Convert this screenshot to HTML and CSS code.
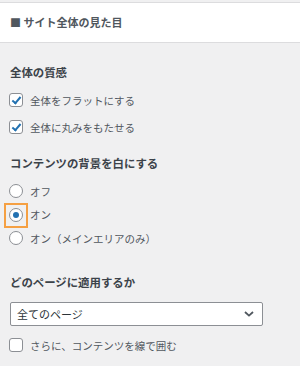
FILE: index.html
```html
<!DOCTYPE html>
<html lang="ja">
<head>
    <meta charset="UTF-8">
    <meta name="viewport" content="width=device-width, initial-scale=1.0">
    <title>サイト全体の見た目</title>
    <link rel="stylesheet" href="styles.css">
</head>
<body>

    <div class="panel-header">■ サイト全体の見た目</div>

    <div class="panel-body">

        <div class="group group-texture">
            <h3 class="group-title">全体の質感</h3>
            <div class="options">
                <label class="option">
                    <input type="checkbox" class="check" checked>
                    <span>全体をフラットにする</span>
                </label>
                <label class="option">
                    <input type="checkbox" class="check" checked>
                    <span>全体に丸みをもたせる</span>
                </label>
            </div>
        </div>

        <div class="group group-bg">
            <h3 class="group-title">コンテンツの背景を白にする</h3>
            <div class="options options-radio">
                <label class="option">
                    <input type="radio" name="bg" class="radio">
                    <span>オフ</span>
                </label>
                <label class="option">
                    <input type="radio" name="bg" class="radio highlight" checked>
                    <span>オン</span>
                </label>
                <label class="option">
                    <input type="radio" name="bg" class="radio">
                    <span>オン（メインエリアのみ）</span>
                </label>
            </div>
        </div>

        <div class="group group-pages">
            <h3 class="group-title">どのページに適用するか</h3>
            <div class="select">
                <span>全てのページ</span>
                <svg class="chevron" width="10" height="6" viewBox="0 0 10 6">
                    <path d="M1 1 L5 4.6 L9 1" fill="none" stroke="#50575e" stroke-width="1.8"/>
                </svg>
            </div>
            <label class="option option-border">
                <input type="checkbox" class="check">
                <span>さらに、コンテンツを線で囲む</span>
            </label>
        </div>

    </div>

</body>
</html>
```

FILE: styles.css
```css
/* --- Base --- */
body {
    margin: 0;
    padding-top: 2px;
    background-color: #f0f0f1;
    font-family: "Noto Sans CJK JP", "Noto Sans", sans-serif;
    color: #50575e;
    height: 100vh;
    overflow: hidden;
}

/* --- Section header --- */
.panel-header {
    height: 39px;
    line-height: 39px;
    padding-left: 10px;
    background-color: #fff;
    border-top: 1px solid #dcdcde;
    border-bottom: 1px solid #dcdcde;
    font-size: 11px;
    font-weight: bold;
    color: #50575e;
}

.panel-body {
    padding: 0 10px 0 9px;
}

/* --- Groups --- */
.group-title {
    margin: 0 0 0 1px;
    height: 16px;
    line-height: 16px;
    font-size: 11.4px;
    font-weight: bold;
    color: #3c434a;
}

.group-texture {
    margin-top: 21px;
}

.group-bg {
    margin-top: 18px;
}

.group-pages {
    margin-top: 26px;
}

.options {
    display: flex;
    flex-direction: column;
    gap: 7px;
    margin-top: 10px;
}

.options-radio {
    gap: 3.5px;
}

.option {
    display: flex;
    align-items: center;
    gap: 7px;
    height: 20px;
    font-size: 10.5px;
    color: #50575e;
    cursor: pointer;
}

.option-border {
    margin-top: 9px;
}

/* --- Checkbox --- */
.check {
    appearance: none;
    -webkit-appearance: none;
    position: relative;
    margin: 0;
    width: 14px;
    height: 14px;
    border: 1px solid #8c8f94;
    border-radius: 3px;
    background-color: #fff;
    box-sizing: border-box;
    flex-shrink: 0;
}

.check:checked::before {
    content: "";
    position: absolute;
    left: 4px;
    top: 1px;
    width: 3px;
    height: 7px;
    border-right: 2px solid #2271b1;
    border-bottom: 2px solid #2271b1;
    transform: rotate(40deg);
}

/* --- Radio --- */
.radio {
    appearance: none;
    -webkit-appearance: none;
    position: relative;
    margin: 0;
    width: 14px;
    height: 14px;
    border: 1px solid #8c8f94;
    border-radius: 50%;
    background-color: #fff;
    box-sizing: border-box;
    flex-shrink: 0;
    overflow: visible;
}

.radio:checked::before {
    content: "";
    position: absolute;
    left: 3px;
    top: 3px;
    width: 6px;
    height: 6px;
    border-radius: 50%;
    background-color: #2271b1;
}

/* orange marker around the selected option */
.highlight::after {
    content: "";
    position: absolute;
    left: -6px;
    top: -6px;
    width: 24px;
    height: 25px;
    border: 2px solid #f5a043;
    box-sizing: border-box;
}

/* --- Select box --- */
.select {
    display: flex;
    align-items: center;
    justify-content: space-between;
    margin: 12px 27px 0 1px;
    height: 24px;
    padding: 0 8px 0 6px;
    background-color: #fff;
    border: 1px solid #8c8f94;
    border-radius: 2px;
    box-sizing: border-box;
    font-size: 11px;
    color: #2c3338;
}

.chevron {
    display: block;
}
```
